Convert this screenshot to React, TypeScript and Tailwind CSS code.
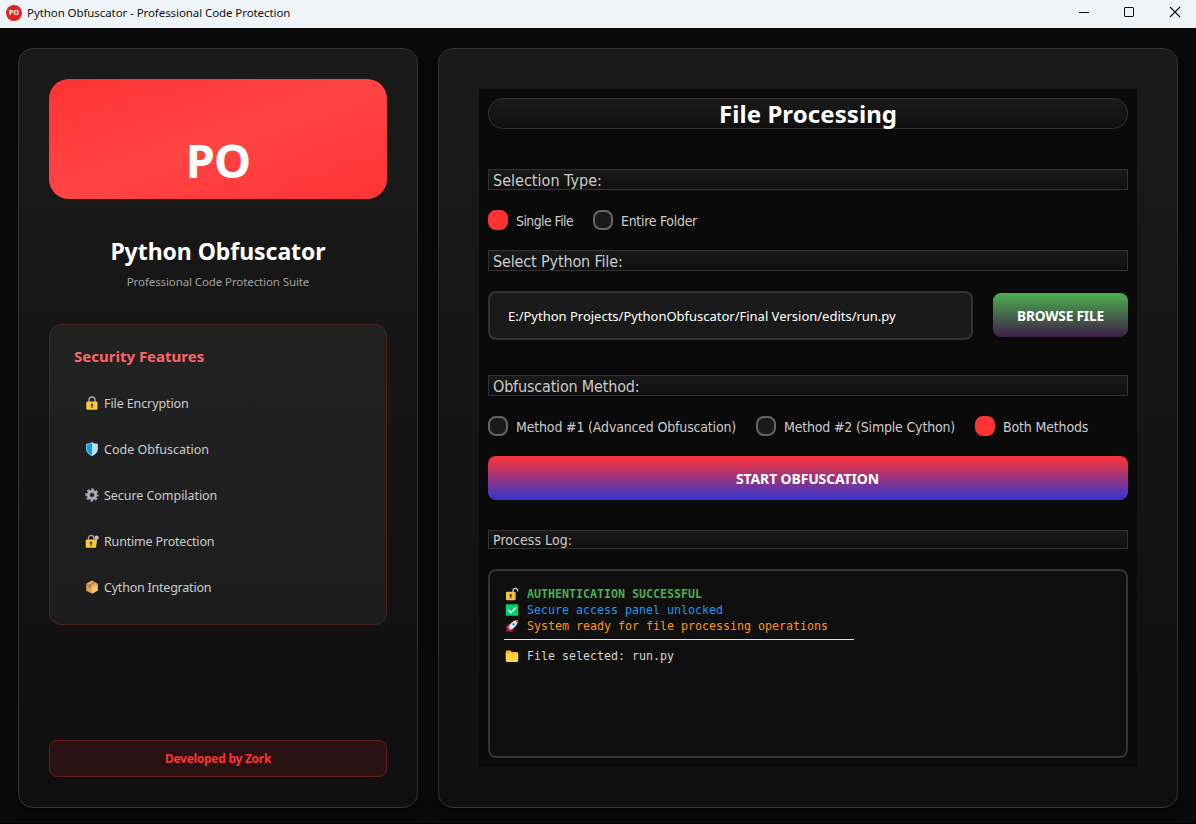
import type { ReactNode } from "react";

const FEATURES: { label: string; icon: ReactNode; tracking: string }[] = [
  { label: "File Encryption", icon: <Lock />, tracking: "tracking-[-0.1px]" },
  { label: "Code Obfuscation", icon: <Shield />, tracking: "" },
  { label: "Secure Compilation", icon: <Gear />, tracking: "tracking-[-0.05px]" },
  { label: "Runtime Protection", icon: <LockKey />, tracking: "tracking-[-0.18px]" },
  { label: "Cython Integration", icon: <Package />, tracking: "tracking-[-0.22px]" },
];

function Lock() {
  return (
    <svg width="14" height="14" viewBox="0 0 14 14">
      <path d="M4 6V4a3 3 0 0 1 6 0v2" fill="none" stroke="#a9a4a6" strokeWidth="1.4" />
      <rect x="1.3" y="5.5" width="11.2" height="8.2" rx="1.2" fill="#fcc934" />
      <circle cx="7" cy="8.7" r="1.3" fill="#4a4152" />
      <rect x="6.4" y="9" width="1.2" height="3" fill="#4a4152" />
    </svg>
  );
}

function Shield() {
  return (
    <svg width="14" height="14" viewBox="0 0 14 14">
      <path d="M7 .5C5.500 1.600 3.500 2 1.500 2v5c0 3 2.200 5.400 5.500 6.700z" fill="#00a6ed" />
      <path d="M7 .5C8.500 1.600 10.500 2 12.500 2v5c0 3-2.200 5.400-5.500 6.700z" fill="#badafd" />
      <path
        d="M7 .5C5.500 1.600 3.500 2 1.500 2v5c0 3 2.200 5.400 5.500 6.700 3.300-1.300 5.500-3.700 5.500-6.700V2c-2 0-4-.4-5.500-1.500z"
        fill="none"
        stroke="#b8dcf4"
        strokeWidth=".8"
      />
    </svg>
  );
}

function Gear() {
  return (
    <svg width="14" height="14" viewBox="0 0 14 14">
      <circle cx="7" cy="7" r="5.700" fill="none" stroke="#a59bb0" strokeWidth="2" strokeDasharray="2.600 1.876" strokeDashoffset="1.300" />
      <circle cx="7" cy="7" r="3.700" fill="none" stroke="#b4acbc" strokeWidth="2.800" />
      <circle cx="7" cy="7" r="2.200" fill="none" stroke="#6d6378" strokeWidth=".6" />
    </svg>
  );
}

function LockKey() {
  return (
    <svg width="14" height="14" viewBox="0 0 14 14">
      <circle cx="11.600" cy="3.700" r="1.300" fill="#8d8794" stroke="#cdc6d3" strokeWidth="1.700" />
      <path d="M11.300 5.500l-.6 4.500" stroke="#b4acbc" strokeWidth="1.800" />
      <path d="M3.400 6V4a2.700 2.700 0 0 1 5.400 0v2" fill="none" stroke="#a9a4a6" strokeWidth="1.300" />
      <rect x=".7" y="5.500" width="10.600" height="8.200" rx="1.200" fill="#fcc934" />
      <circle cx="6" cy="8.700" r="1.300" fill="#4a4152" />
      <rect x="5.400" y="9" width="1.200" height="3" fill="#4a4152" />
    </svg>
  );
}

function Package() {
  return (
    <svg width="14" height="14" viewBox="0 0 14 14">
      <path d="M1.200 3.700L7 6.500v7.200L1.200 10.800z" fill="#e39d54" />
      <path d="M12.800 3.700L7 6.500v7.200l5.800-2.900z" fill="#f8c476" />
      <path d="M7 .6l5.800 3.100L7 6.500 1.200 3.700z" fill="#f0b56a" />
      <path d="M9.200 1.700l1.700 1-5.800 2.900v2.500l-1.600-.8V4.800z" fill="#a56a3c" opacity=".8" />
    </svg>
  );
}

function OpenLock() {
  return (
    <svg width="14" height="14" viewBox="0 0 14 14">
      <path d="M8 6V3.600a2.300 2.300 0 0 1 4.600 0V4.500" fill="none" stroke="#cdc8d0" strokeWidth="1.200" />
      <rect x="1" y="4.800" width="9.600" height="8.400" rx="1" fill="#f9c23c" />
      <circle cx="5.800" cy="8.200" r="1.300" fill="#4a4152" />
      <rect x="5.200" y="8.500" width="1.200" height="3" fill="#4a4152" />
    </svg>
  );
}

function Check() {
  return (
    <svg width="14" height="14" viewBox="0 0 14 14">
      <rect x=".8" y="1.200" width="12.400" height="11.600" rx="1" fill="#00d26a" />
      <path d="M3.500 7.200l2.400 2.500 4.800-5" fill="none" stroke="#f4f4f4" strokeWidth="1.500" strokeLinecap="round" />
    </svg>
  );
}

function Rocket() {
  return (
    <svg width="14" height="14" viewBox="0 0 14 14">
      <path d="M5 4.200L1.500 6.500 .8 9.500 4 8.500zM9.500 9l-2.200 3.500-2.800.7 1-3.200z" fill="#ca0b4a" />
      <path d="M3.300 9.300L.8 13.200l3.900-2.500z" fill="#f92f60" />
      <path d="M3.300 8.500C5 4 8.500 1.200 13 1c-.2 4.500-3 8-7.500 9.700z" fill="#ece6f0" />
      <path d="M9.900 1.700C10.900 1.200 12 1 13 1c0 1-.2 2.100-.7 3.100z" fill="#f92f60" />
      <path d="M2.700 8.300l3 3-1 .6-2.500-2.500z" fill="#f92f60" />
      <circle cx="8.700" cy="5.300" r="1.300" fill="#26a0e8" />
    </svg>
  );
}

function Folder() {
  return (
    <svg width="14" height="14" viewBox="0 0 14 14">
      <path d="M.8 2.300c0-.5.300-.8.800-.8h3.800L6.900 3h5.500c.5 0 .8.300.8.800V6H.8z" fill="#ffb02e" />
      <rect x=".8" y="4.400" width="12.400" height="8.500" rx=".8" fill="#fcd53f" />
    </svg>
  );
}

function SectionLabel({ children, className }: { children: ReactNode; className: string }) {
  return (
    <div
      className={`flex items-center border border-[#333333] bg-linear-[to_bottom,#1a1a1a,#0f0f0f] pl-[4px] font-['DejaVu_Sans_Condensed',sans-serif] leading-none whitespace-nowrap text-[#cccccc] ${className}`}
    >
      {children}
    </div>
  );
}

function Radio({ label, checked, className, tracking }: { label: string; checked?: boolean; className: string; tracking: string }) {
  return (
    <label className={`flex items-center ${className}`}>
      <span
        className={`size-5 shrink-0 rounded-[8px] border-2 ${checked ? "border-[#ff3333] bg-[#ff3333]" : "border-[#666666] bg-[#1a1a1a]"}`}
      />
      <span
        className={`pt-[2px] pl-[8px] font-['DejaVu_Sans_Condensed',sans-serif] text-[14px] leading-[18px] whitespace-nowrap text-[#cccccc] ${tracking}`}
      >
        {label}
      </span>
    </label>
  );
}

function LogLine({ icon, className, children }: { icon: ReactNode; className: string; children: ReactNode }) {
  return (
    <div className={`flex h-4 items-center whitespace-pre ${className}`}>
      <span className="mr-[8px] ml-px">{icon}</span>
      {children}
    </div>
  );
}

export default function App() {
  return (
    <div className="flex h-[824px] w-[1196px] flex-col overflow-hidden border-b border-black bg-[#0a0a0a] font-['Noto_Sans',sans-serif]">
      <header className="flex h-7 shrink-0 items-start bg-[#eff4f9]">
        <div className="flex h-[25px] grow items-center pl-[6px]">
          <span className="flex size-4 items-center justify-center rounded-full bg-[#e02424] text-[7px] leading-none font-bold text-white">PO</span>
          <span className="pl-[5px] text-[11.5px] leading-none tracking-[-0.08px] text-[#111111]">
            Python Obfuscator - Professional Code Protection
          </span>
        </div>
        <svg className="mt-[6px] mr-[15px]" width="102" height="12" viewBox="0 0 102 12" fill="none" stroke="#111111">
          <path d="M0 6.500h10" />
          <rect x="45.500" y="1.500" width="9" height="9" rx=".5" />
          <path d="M91 1l10 10M101 1l-10 10" strokeWidth="1.100" />
        </svg>
      </header>

      <div className="flex gap-5 px-[18px] pt-5">
        <aside className="flex h-[760px] w-[400px] flex-col rounded-[15px] border border-[#333333] bg-linear-[to_bottom,#1a1a1a,#0f0f0f] p-[30px] shadow-[0_2px_10px_rgba(0,0,0,0.5)]">
          <div className="flex h-[120px] shrink-0 items-center justify-center rounded-[20px] bg-linear-[to_bottom_right,#ff3333,#ff4444,#ff3333] pt-[43px] text-[47px] leading-none font-bold text-white">
            <span className="tracking-[-1px]">PO</span>
          </div>
          <h1 className="mt-9 text-center text-[23px] leading-8 font-bold tracking-[-0.05px] text-white">Python Obfuscator</h1>
          <p className="mt-[7px] text-center text-[11.5px] leading-4 tracking-[-0.1px] text-[#a0a0a0]">Professional Code Protection Suite</p>

          <section className="mt-[34px] h-[301px] shrink-0 rounded-[12px] border border-[#4a2222] bg-linear-[to_bottom,#222222,#1d1d1d] pt-[19px] pl-6">
            <h2 className="text-[15px] leading-6 font-bold text-[#ff6666]">Security Features</h2>
            <ul className="mt-[12px]">
              {FEATURES.map((f) => (
                <li key={f.label} className="flex h-[46px] items-center pl-[11px]">
                  {f.icon}
                  <span className={`pt-[2px] pl-[5px] text-[12.5px] leading-4 text-[#cccccc] ${f.tracking}`}>{f.label}</span>
                </li>
              ))}
            </ul>
          </section>

          <div className="mt-auto flex h-[37px] items-center justify-center rounded-[8px] border border-[#661c1c] bg-[#281214] text-[12px] leading-none font-bold tracking-[-0.27px] text-[#ff3333]">
            Developed by Zork
          </div>
        </aside>

        <main className="h-[760px] w-[740px] rounded-[15px] border border-[#333333] bg-linear-[to_bottom,#1a1a1a,#0f0f0f] p-10 shadow-[0_2px_10px_rgba(0,0,0,0.5)]">
          <div className="flex h-[678px] flex-col bg-[#0a0a0a] p-[9px]">
            <h2 className="flex h-[31px] items-center justify-center rounded-[15px] border border-[#333333] bg-linear-[to_bottom,#1a1a1a,#0f0f0f] text-[24px] leading-none font-bold tracking-[0.08px] text-white">
              File Processing
            </h2>

            <SectionLabel className="mt-10 h-[21px] pt-[2px] text-[16px] tracking-[0.02px]">Selection Type:</SectionLabel>
            <div className="mt-5 flex h-5">
              <Radio label="Single File" checked className="w-[105px]" tracking="tracking-[-0.6px]" />
              <Radio label="Entire Folder" className="" tracking="tracking-[-0.3px]" />
            </div>

            <SectionLabel className="mt-5 h-[21px] pt-[2px] text-[16px] tracking-[-0.14px]">Select Python File:</SectionLabel>
            <div className="mt-5 flex items-center gap-5">
              <div className="flex h-[49px] w-[485px] items-center rounded-[8px] border-2 border-[#333333] bg-[#1a1a1a] pt-[2px] pl-[18px] text-[13px] leading-none tracking-[-0.01px] text-white">
                E:/Python Projects/PythonObfuscator/Final Version/edits/run.py
              </div>
              <button className="mb-px h-11 w-[135px] rounded-[8px] bg-linear-[to_bottom,#4caf50,#3d1f47] pt-[2px] text-[13.7px] leading-none font-bold tracking-[-0.18px] text-white">
                BROWSE FILE
              </button>
            </div>

            <SectionLabel className="mt-[35px] h-[21px] pt-[2px] text-[16px] tracking-[-0.18px]">Obfuscation Method:</SectionLabel>
            <div className="mt-5 flex h-5">
              <Radio label="Method #1 (Advanced Obfuscation)" className="w-[268px]" tracking="tracking-[-0.17px]" />
              <Radio label="Method #2 (Simple Cython)" className="w-[219px]" tracking="tracking-[-0.18px]" />
              <Radio label="Both Methods" checked className="" tracking="tracking-[-0.15px]" />
            </div>

            <button className="mt-5 h-11 rounded-[8px] bg-linear-[to_bottom,#ff3333,#3333cc] pt-[2px] pr-px text-[14px] leading-none font-bold tracking-[-0.15px] text-white">
              START OBFUSCATION
            </button>

            <SectionLabel className="mt-[30px] h-[19px] text-[14px] tracking-[0.05px]">Process Log:</SectionLabel>
            <div className="mt-5 h-[189px] rounded-[8px] border-2 border-[#333333] bg-[#0f0f0f] pt-[15px] pl-[14px] font-['DejaVu_Sans_Mono',monospace] text-[11.63px] leading-4">
              <LogLine icon={<OpenLock />} className="font-bold text-[#4caf50]">AUTHENTICATION SUCCESSFUL</LogLine>
              <LogLine icon={<Check />} className="text-[#2196f3]">Secure access panel unlocked</LogLine>
              <LogLine icon={<Rocket />} className="text-[#ff9800]">System ready for file processing operations</LogLine>
              <div className="mt-[5px] mb-[8px] h-px w-[350px] bg-[#e0e0e0]" />
              <LogLine icon={<Folder />} className="text-[#d4d4d4]">File selected: run.py</LogLine>
            </div>
          </div>
        </main>
      </div>
    </div>
  );
}
